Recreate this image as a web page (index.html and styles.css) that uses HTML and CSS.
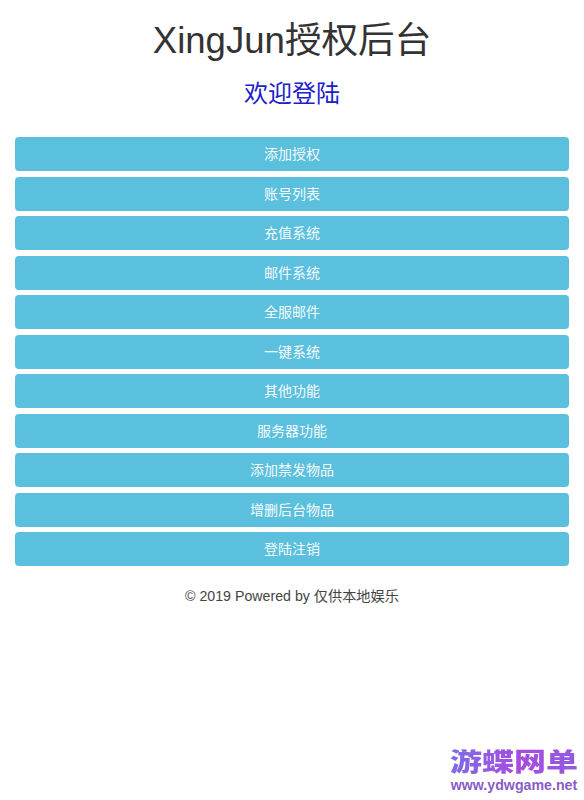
FILE: index.html
```html
<!DOCTYPE html>
<html lang="zh-CN">
<head>
  <meta charset="UTF-8" />
  <title>XingJun授权后台</title>
  <link rel="stylesheet" href="styles.css" />
</head>
<body>
  <header class="page-head">
    <h1>XingJun授权后台</h1>
    <h2>欢迎登陆</h2>
  </header>

  <nav class="menu">
    <a class="menu-btn" href="#">添加授权</a>
    <a class="menu-btn" href="#">账号列表</a>
    <a class="menu-btn" href="#">充值系统</a>
    <a class="menu-btn" href="#">邮件系统</a>
    <a class="menu-btn" href="#">全服邮件</a>
    <a class="menu-btn" href="#">一键系统</a>
    <a class="menu-btn" href="#">其他功能</a>
    <a class="menu-btn" href="#">服务器功能</a>
    <a class="menu-btn" href="#">添加禁发物品</a>
    <a class="menu-btn" href="#">增删后台物品</a>
    <a class="menu-btn" href="#">登陆注销</a>
  </nav>

  <footer class="page-foot">© 2019 Powered by 仅供本地娱乐</footer>

  <!-- watermark -->
  <div class="watermark">
    <div class="watermark-name">游蝶网单</div>
    <div class="watermark-url">www.ydwgame.net</div>
  </div>
</body>
</html>
```

FILE: styles.css
```css
* {
  box-sizing: border-box;
}

html, body {
  height: 100%;
}

body {
  margin: 0;
  position: relative;
  overflow: hidden;
  background: #fff;
  color: #333;
  font-family: "Liberation Sans", "Noto Sans CJK SC", sans-serif;
  font-size: 14px;
}

/* title */
.page-head {
  text-align: center;
  padding-top: 19px;
}

.page-head h1 {
  margin: 0;
  font-size: 36.6px;
  font-weight: 400;
  line-height: 44px;
  color: #333;
}

.page-head h2 {
  margin: 15px 0 0;
  font-size: 24px;
  font-weight: 400;
  line-height: 32px;
  color: #2020cc;
}

/* buttons */
.menu {
  display: flex;
  flex-direction: column;
  gap: 5.5px;
  margin-top: 27px;
  padding: 0 15px;
}

.menu-btn {
  display: block;
  height: 34px;
  line-height: 34px;
  text-align: center;
  text-decoration: none;
  font-size: 14px;
  color: #f4fbfd;
  background-color: #5bc0de;
  border-radius: 4px;
}

.page-foot {
  margin-top: 20px;
  text-align: center;
  font-size: 14.2px;
  line-height: 20px;
  color: #444;
}

/* bottom right mark */
.watermark {
  position: absolute;
  right: 6px;
  bottom: 7px;
  text-align: center;
}

.watermark-name {
  font-size: 32px;
  font-weight: 900;
  line-height: 30px;
  margin-bottom: 3px;
  transform: scaleY(0.82);
  transform-origin: center bottom;
  background: linear-gradient(100deg, #7a6ee6, #a84be0 55%, #8f5ce0);
  -webkit-background-clip: text;
  background-clip: text;
  color: transparent;
}

.watermark-url {
  font-size: 14.2px;
  font-weight: 700;
  line-height: 16px;
  color: #8a5cc8;
}
```
